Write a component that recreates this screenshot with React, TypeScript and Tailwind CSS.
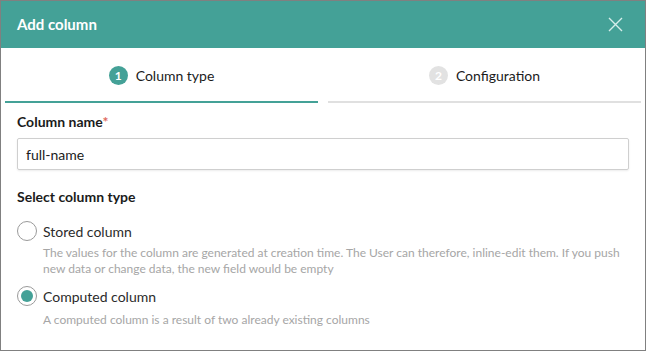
import React from "react";

const TEAL = "#44a197";

function Step({ n, label, active }: { n: number; label: string; active: boolean }) {
	return (
		<div className="flex-1 flex flex-col">
			<div className="h-[53px] flex items-center justify-center gap-[8px] pt-[2px]">
				<span
					className={`w-[19px] h-[19px] rounded-full flex items-center justify-center text-white text-[12px] font-bold ${
						active ? "bg-[#44a197]" : "bg-[#e2e2e2]"
					}`}
				>
					{n}
				</span>
				<span className="text-[14px] text-[#1b1b1b]">{label}</span>
			</div>
			<div className={`h-[2px] ${active ? "bg-[#44a197]" : "bg-[#e0e0e0]"}`} />
		</div>
	);
}

function Radio({ checked, label, children }: { checked: boolean; label: string; children: React.ReactNode }) {
	return (
		<div className="flex flex-col">
			<div className="flex items-center gap-[6px] h-[20px]">
				<span className="w-[20px] h-[20px] rounded-full border border-[#9a9a9a] bg-white flex items-center justify-center">
					{checked && <span className="w-[12px] h-[12px] rounded-full bg-[#44a197]" />}
				</span>
				<span className="text-[14px] text-[#2b2b2b]">{label}</span>
			</div>
			<div className="pl-[26px] text-[12px] leading-[16px] text-[#a6a6a6]">{children}</div>
		</div>
	);
}

export default function App() {
	return (
		<div
			className="w-[646px] h-[351px] border border-[#808080] bg-white flex flex-col overflow-hidden"
			style={{ fontFamily: "Lato, 'Noto Sans', sans-serif" }}
		>
			{/* header */}
			<div className="h-[47px] shrink-0 flex items-center justify-between pl-[16px] pr-[22px]" style={{ background: TEAL }}>
				<span className="text-white font-bold text-[15px]">Add column</span>
				<svg width="15" height="15" viewBox="0 0 15 15" fill="none" stroke="#d6eeeb" strokeWidth="1.4">
					<path d="M1 1 L14 14 M14 1 L1 14" />
				</svg>
			</div>

			{/* steps */}
			<div className="flex gap-[10px] px-[4px]">
				<Step n={1} label="Column type" active />
				<Step n={2} label="Configuration" active={false} />
			</div>

			{/* body */}
			<div className="flex flex-col px-[16px] pt-[9px]">
				<div className="text-[14px] leading-[20px] font-bold text-[#1b1b1b]">
					Column name<span className="text-[#e06a5e]">*</span>
				</div>
				<div className="mt-[6px] h-[32px] border border-[#cfcfcf] rounded-[2px] shadow-[0_1px_2px_rgba(0,0,0,0.08)] flex items-center px-[8px] text-[14px] text-[#1b1b1b]">
					full-name
				</div>
				<div className="mt-[17px] text-[14px] leading-[20px] font-bold text-[#1b1b1b]">Select column type</div>
				<div className="mt-[14px]">
					<Radio checked={false} label="Stored column">
						<div className="mt-[4px]">
							The values for the column are generated at creation time. The User can therefore, inline-edit them. If you push
							<br />
							new data or change data, the new field would be empty
						</div>
					</Radio>
				</div>
				<div className="mt-[9px]">
					<Radio checked label="Computed column">
						<div className="mt-[6px]">A computed column is a result of two already existing columns</div>
					</Radio>
				</div>
			</div>
		</div>
	);
}
